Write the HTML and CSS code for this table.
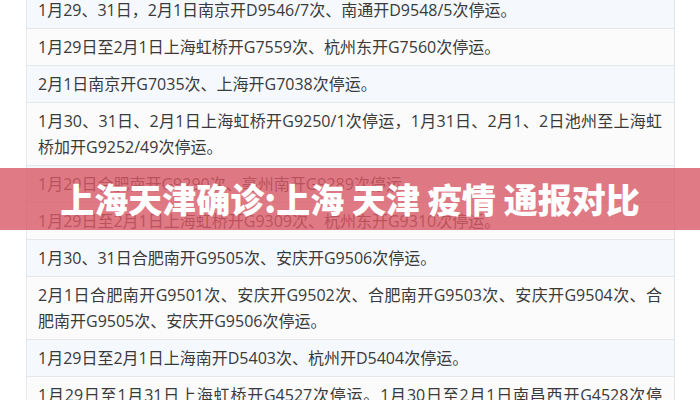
FILE: index.html
```html
<!DOCTYPE html>
<html lang="zh-CN">
<head>
    <meta charset="UTF-8">
    <meta name="viewport" content="width=device-width, initial-scale=1.0">
    <title>上海天津确诊:上海 天津 疫情 通报对比</title>
    <link rel="stylesheet" href="styles.css">
</head>
<body>
    <div class="page">
        <table class="notice-table">
            <tbody>
                <tr><td>1月29、31日，2月1日南京开D9546/7次、南通开D9548/5次停运。</td></tr>
                <tr><td>1月29日至2月1日上海虹桥开G7559次、杭州东开G7560次停运。</td></tr>
                <tr><td>2月1日南京开G7035次、上海开G7038次停运。</td></tr>
                <tr><td>1月30、31日、2月1日上海虹桥开G9250/1次停运，1月31日、2月1、2日池州至上海虹桥加开G9252/49次停运。</td></tr>
                <tr><td>1月29日合肥南开G9290次、亳州南开G9289次停运。</td></tr>
                <tr><td>1月29日至2月1日上海虹桥开G9309次、杭州东开G9310次停运。</td></tr>
                <tr><td>1月30、31日合肥南开G9505次、安庆开G9506次停运。</td></tr>
                <tr><td>2月1日合肥南开G9501次、安庆开G9502次、合肥南开G9503次、安庆开G9504次、合肥南开G9505次、安庆开G9506次停运。</td></tr>
                <tr><td>1月29日至2月1日上海南开D5403次、杭州开D5404次停运。</td></tr>
                <tr><td>1月29日至1月31日上海虹桥开G4527次停运。1月30日至2月1日南昌西开G4528次停运。</td></tr>
            </tbody>
        </table>

        <div class="banner">上海天津确诊:上海 天津 疫情 通报对比</div>
    </div>
</body>
</html>
```

FILE: styles.css
```css
body {
    margin: 0;
    background: #fff;
    font-family: "Open Sans", "Noto Sans CJK SC", sans-serif;
    color: #3a3a3a;
    overflow: hidden;
}

.page {
    position: relative;
    height: 400px;
    overflow: hidden;
    padding: 0 25px 0 26px;
}

.notice-table {
    width: 100%;
    margin-top: -8px;
    border-collapse: collapse;
    border-left: 1px solid #e6e8eb;
    border-right: 1px solid #e3e5e8;
}

.notice-table td {
    padding: 5px 12px 5px 11px;
    font-size: 16px;
    line-height: 26px;
    text-align: justify;
    border-bottom: 1px solid #e4e7eb;
}

.notice-table tr:nth-child(odd) td {
    background: #f5f9fe;
}

.notice-table tr:nth-child(even) td {
    background: #fbfbfb;
}

.banner {
    position: absolute;
    left: 0;
    right: 0;
    top: 168px;
    height: 62px;
    background: rgba(216, 89, 101, 0.8);
    color: #fff;
    font-family: "Noto Sans CJK SC", sans-serif;
    font-weight: 900;
    font-size: 34px;
    line-height: 62px;
    text-align: center;
    white-space: nowrap;
}
```
